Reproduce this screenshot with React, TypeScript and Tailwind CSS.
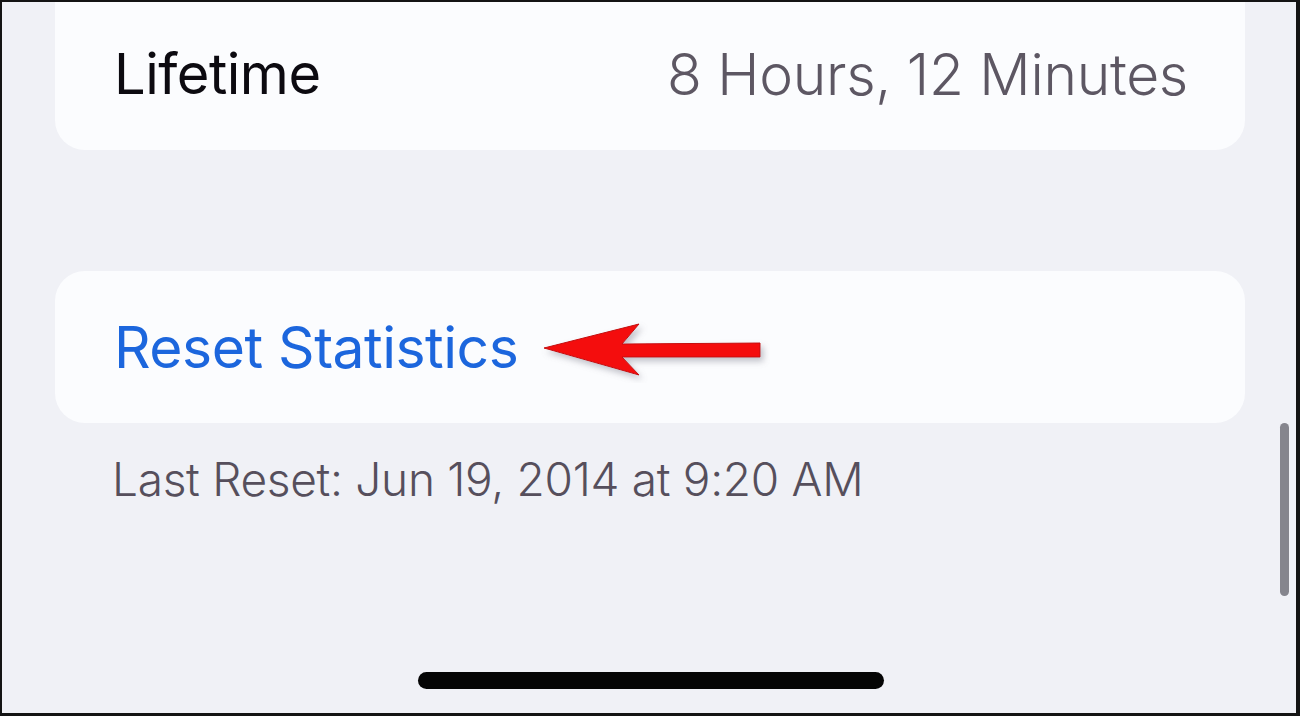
import React from "react";

export default function App() {
  return (
    <div
      className="relative h-[716px] w-[1300px] overflow-hidden border-t-2 border-l-2 border-r-[4px] border-b-[3px] border-[#141414] bg-[#f0f1f6]"
      style={{ fontFamily: "Inter, 'Noto Sans', sans-serif" }}
    >
      <div className="flex flex-col pl-[53px] pr-[51px]">
        <div className="flex h-[148px] items-center justify-between rounded-b-[30px] bg-[#fbfcfe] pb-[4px] pl-[59px] pr-[57px]">
          <span className="text-[56px] leading-none tracking-[-0.5px] text-[#0c0a10]">Lifetime</span>
          <span className="text-[57px] font-light leading-none tracking-[-0.3px] text-[#5d5763]">8 Hours, 12 Minutes</span>
        </div>

        <div className="mt-[121px] flex h-[152px] items-center rounded-[30px] bg-[#fbfcfe] pl-[59px]">
          <span className="text-[57px] leading-none tracking-[-0.5px] text-[#1c66dd]">Reset Statistics</span>
          <svg width="230" height="70" viewBox="0 0 230 70" className="ml-[22px] mt-[2px]">
            <defs>
              <filter id="sh" x="-20%" y="-40%" width="140%" height="180%">
                <feDropShadow dx="3" dy="4" stdDeviation="3" floodColor="#7a7a8a" floodOpacity="0.45" />
              </filter>
            </defs>
            <polygon
              points="4,35 99,11 82,31 220,30 220,44 82,44 99,62"
              fill="#f41111"
              stroke="#c40d0d"
              strokeWidth="1"
              strokeLinejoin="round"
              filter="url(#sh)"
            />
          </svg>
        </div>

        <div className="mt-[33px] pl-[57px] text-[46px] font-light leading-none tracking-[-0.3px] text-[#564f5c]">
          Last Reset: Jun 19, 2014 at 9:20 AM
        </div>
      </div>

      <div className="absolute left-[1278px] top-[421px] h-[173px] w-[9px] rounded-full bg-[#85858d]" />

      <div className="absolute left-[416px] top-[670px] h-[17px] w-[466px] rounded-full bg-[#050505]" />
    </div>
  );
}
